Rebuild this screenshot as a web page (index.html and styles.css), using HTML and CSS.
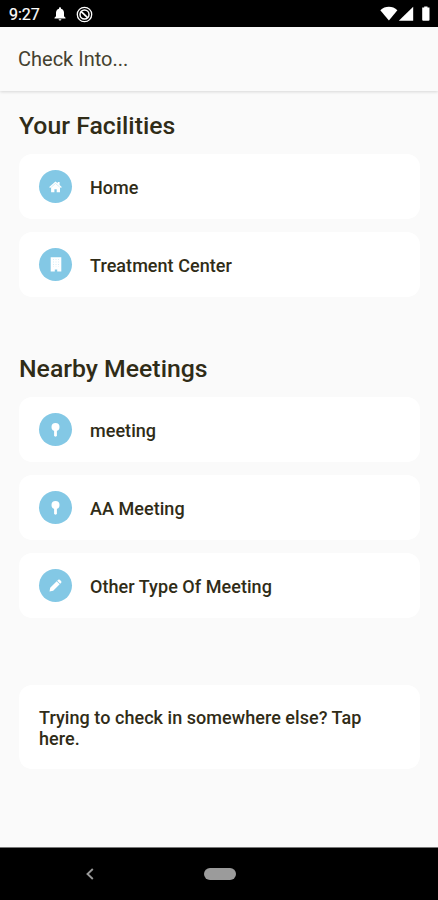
FILE: index.html
```html
<!DOCTYPE html>
<html lang="en">
<head>
<meta charset="utf-8">
<meta name="viewport" content="width=device-width, initial-scale=1">
<title>Check Into</title>
<link rel="stylesheet" href="styles.css">
</head>
<body>
<div class="statusbar">
  <span class="clock">9:27</span>
  <svg class="bell" width="12" height="14" viewBox="0 0 12 14"><path fill="#fff" d="M6 0.3C5.400.3 5 .7 5 1.300v.4C3 2.200 2 3.800 2 5.700v3.500L.5 10.800v.8h11v-.8L10 9.200V5.700C10 3.800 9 2.200 7 1.700v-.4C7 .7 6.600.3 6 .3zM4.600 12.200a1.400 1.400 0 0 0 2.800 0z"/></svg>
  <svg class="dnd" width="17" height="17" viewBox="0 0 17 17" fill="none" stroke="#fff"><circle cx="8.500" cy="8.500" r="7.200" stroke-width="1.300"/><circle cx="8.500" cy="8.500" r="4.500" stroke-width="1.500"/><path d="M5 5.300l6.800 6.500" stroke-width="1.700"/></svg>
  <svg class="signals" width="50" height="16" viewBox="0 0 50 16" fill="#fff"><path d="M.3 4.200C5-.4 12.700-.4 17.400 4.200L8.900 14.500z"/><path d="M33.200.8v14H18.800z"/><path d="M42.200 1.500h2V.4h3.300v1.100h2v12.300q0 1-1 1h-5.300q-1 0-1-1z"/></svg>
</div>
<header class="appbar">Check Into...</header>
<main class="content">
  <section class="group">
    <h2>Your Facilities</h2>
    <div class="card">
      <span class="badge"><svg width="13" height="12" viewBox="0 0 13 12"><path fill="#fff" d="M6.500.4l2.200 1.900V1h1.900v3l2.200 2-.8 1-1-.8v5H7.700V8.300H5.400v2.900H2.100v-5L1 7l-.8-1z"/><path d="M2.300 6.100l4.200-3.600 4.200 3.600" fill="none" stroke="#a9daee" stroke-width=".5"/></svg></span>
      <span class="label">Home</span>
    </div>
    <div class="card">
      <span class="badge"><svg width="12" height="15" viewBox="0 0 12 15"><path fill="#fff" d="M.7.300h10.600v14.200H7.200V12.500H4.800v2H.7z"/><path stroke="#cfeaf5" stroke-width=".8" stroke-dasharray="1 1.500" d="M3.500 2v8M6 2v8M8.500 2v8"/></svg></span>
      <span class="label">Treatment Center</span>
    </div>
  </section>
  <section class="group">
    <h2>Nearby Meetings</h2>
    <div class="card">
      <span class="badge"><svg width="9" height="14" viewBox="0 0 9 14" fill="#fff"><circle cx="4.500" cy="4.100" r="4"/><path d="M3.100 7h2.800v6l-1.400.8L3.100 13z"/></svg></span>
      <span class="label">meeting</span>
    </div>
    <div class="card">
      <span class="badge"><svg width="9" height="14" viewBox="0 0 9 14" fill="#fff"><circle cx="4.500" cy="4.100" r="4"/><path d="M3.100 7h2.800v6l-1.400.8L3.100 13z"/></svg></span>
      <span class="label">AA Meeting</span>
    </div>
    <div class="card">
      <span class="badge"><svg width="13" height="13" viewBox="0 0 13 13" fill="#fff"><path d="M.5 12.500l.7-3.700L7.700 2.300l3 3-6.500 6.500zM8.200 1.800l1-1q.8-.6 1.600 0l1.400 1.400q.6.800 0 1.600l-1 1z"/></svg></span>
      <span class="label">Other Type Of Meeting</span>
    </div>
  </section>
  <div class="card prompt">Trying to check in somewhere else? Tap here.</div>
</main>
<nav class="navbar">
  <svg class="back" width="8" height="12" viewBox="0 0 8 12"><path d="M6.800 1L1.500 6l5.300 5" fill="none" stroke="#999" stroke-width="1.900"/></svg>
  <span class="pill"></span>
</nav>
</body>
</html>
```
FILE: styles.css
```css
* { box-sizing: border-box; }
body {
  margin: 0;
  height: 900px;
  display: flex;
  flex-direction: column;
  overflow: hidden;
  background: #fafafa;
  color: #302c17;
  font-family: Roboto, "Liberation Sans", sans-serif;
}
svg { display: block; flex: none; }
.statusbar {
  height: 27px;
  flex: none;
  display: flex;
  align-items: center;
  padding: 1px 8px 0 9px;
  background: #000;
  color: #fff;
}
.clock { width: 45px; padding-top: 1px; font-size: 16px; line-height: 25px; -webkit-text-stroke: .2px #fff; }
.bell { margin-right: 10px; }
.signals { margin-left: auto; }
.appbar {
  height: 64px;
  flex: none;
  padding-left: 18px;
  font-size: 20px;
  line-height: 65px;
  color: #45412f;
  box-shadow: 0 1px 3px rgba(0, 0, 0, .14);
}
.content { flex: 1; padding: 20px 18px 0 19px; }
.group { margin-bottom: 57px; }
.group + .group { margin-bottom: 67px; }
h2 {
  margin: 0 0 13px;
  font-size: 24.8px;
  line-height: 30px;
  font-weight: 500;
}
.card {
  display: flex;
  align-items: center;
  height: 65px;
  padding-left: 20px;
  border-radius: 13px;
  background: #fff;
  font-size: 18px;
  font-weight: 500;
  letter-spacing: .05px;
}
.card + .card { margin-top: 13px; }
.label { padding-top: 2px; }
.badge {
  width: 33px;
  height: 33px;
  margin-right: 18px;
  display: flex;
  align-items: center;
  justify-content: center;
  border-radius: 50%;
  background: #83c8e5;
}
.prompt { height: 84px; padding: 1px 40px 0 20px; line-height: 21px; }
.navbar {
  height: 53px;
  flex: none;
  display: flex;
  align-items: center;
  background: #000;
  border-top: 1px solid #777;
}
.back { margin-left: 86px; }
.pill { width: 32px; height: 12px; margin-left: 110px; border-radius: 6px; background: #9b9b9b; }
```
